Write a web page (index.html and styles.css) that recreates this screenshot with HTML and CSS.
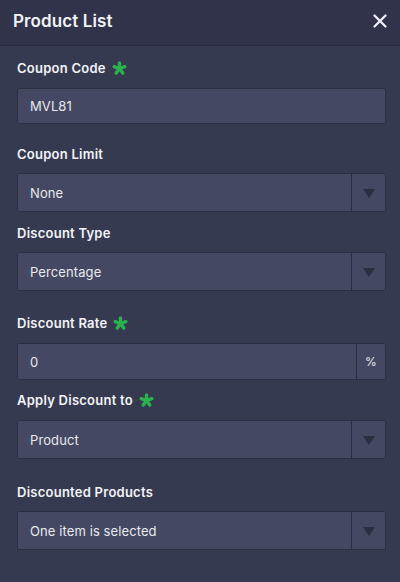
FILE: index.html
```html
<!DOCTYPE html>
<html>
<head>
<meta charset="utf-8">
<link rel="stylesheet" href="styles.css">
</head>
<body>
<div class="panel">
  <header class="head">
    <h1 class="title">Product List</h1>
    <svg class="close" viewBox="0 0 14 14" width="14" height="14"><path d="M1.5 1.5 L12.5 12.5 M12.5 1.5 L1.5 12.5" stroke="#f2f3f7" stroke-width="2.2" stroke-linecap="round"/></svg>
  </header>
  <main class="form">
    <div class="field f1">
      <label class="lbl">Coupon Code <svg class="req" viewBox="0 0 16 16" width="15" height="15"><g stroke="#2bb24c" stroke-width="3.6" stroke-linecap="round"><path d="M8 8 L8 2"/><path d="M8 8 L13.7 6.1"/><path d="M8 8 L11.5 12.9"/><path d="M8 8 L4.5 12.9"/><path d="M8 8 L2.3 6.1"/></g></svg></label>
      <div class="box"><span class="val">MVL81</span></div>
    </div>
    <div class="field f2">
      <label class="lbl">Coupon Limit</label>
      <div class="box sel"><span class="val">None</span><span class="arrow"><i class="tri"></i></span></div>
    </div>
    <div class="field f3">
      <label class="lbl">Discount Type</label>
      <div class="box sel"><span class="val">Percentage</span><span class="arrow"><i class="tri"></i></span></div>
    </div>
    <div class="field f4">
      <label class="lbl">Discount Rate <svg class="req" viewBox="0 0 16 16" width="15" height="15"><g stroke="#2bb24c" stroke-width="3.6" stroke-linecap="round"><path d="M8 8 L8 2"/><path d="M8 8 L13.7 6.1"/><path d="M8 8 L11.5 12.9"/><path d="M8 8 L4.5 12.9"/><path d="M8 8 L2.3 6.1"/></g></svg></label>
      <div class="box rate"><span class="val">0</span><span class="addon">%</span></div>
    </div>
    <div class="field f5">
      <label class="lbl">Apply Discount to <svg class="req" viewBox="0 0 16 16" width="15" height="15"><g stroke="#2bb24c" stroke-width="3.6" stroke-linecap="round"><path d="M8 8 L8 2"/><path d="M8 8 L13.7 6.1"/><path d="M8 8 L11.5 12.9"/><path d="M8 8 L4.5 12.9"/><path d="M8 8 L2.3 6.1"/></g></svg></label>
      <div class="box sel"><span class="val">Product</span><span class="arrow"><i class="tri"></i></span></div>
    </div>
    <div class="field f6">
      <label class="lbl">Discounted Products</label>
      <div class="box sel"><span class="val">One item is selected</span><span class="arrow"><i class="tri"></i></span></div>
    </div>
  </main>
</div>
</body>
</html>
```
FILE: styles.css
```css
html, body {
  margin: 0;
  padding: 0;
  background: #363a50;
}
body {
  width: 400px;
  height: 582px;
  font-family: Inter, "Noto Sans", sans-serif;
  color: #eceef3;
}
.panel {
  display: flex;
  flex-direction: column;
  height: 582px;
  background: #363a50;
}
.head {
  height: 45px;
  display: flex;
  align-items: center;
  justify-content: space-between;
  padding: 0 13px 0 13px;
  background: #30334a;
  border-bottom: 1px solid #262838;
}
.title {
  margin: 0;
  font-size: 17px;
  font-weight: 600;
  color: #f2f3f7;
  letter-spacing: 0.1px;
  position: relative;
  top: -2px;
}
.close {
  display: block;
  position: relative;
  top: -2px;
}
.form {
  display: flex;
  flex-direction: column;
  padding: 0 14px 0 17px;
}
.field {
  display: flex;
  flex-direction: column;
}
.lbl {
  display: flex;
  align-items: center;
  gap: 6px;
  height: 16px;
  font-size: 13px;
  font-weight: 600;
  letter-spacing: 0.25px;
  color: #f2f3f7;
  margin-bottom: 12px;
}
.req { display: block; }
.f1 { margin-top: 14px; }
.f2 { margin-top: 22px; }
.f3 { margin-top: 13px; }
.f4 { margin-top: 24px; }
.f5 { margin-top: 12px; }
.f6 { margin-top: 25px; }
.f2 .lbl, .f3 .lbl, .f6 .lbl { margin-bottom: 11px; }
.box {
  display: flex;
  align-items: center;
  height: 34px;
  background: #444862;
  border: 1px solid #2c2f42;
  border-radius: 2px;
  font-size: 13px;
  letter-spacing: 0.1px;
  color: #e8e9ee;
}
.sel { height: 37px; }
.rate { height: 35px; }
.val {
  flex: 1;
  padding-left: 12px;
}
.arrow {
  align-self: stretch;
  width: 33px;
  border-left: 1px solid #2c2f42;
  display: flex;
  align-items: center;
  justify-content: center;
}
.tri {
  width: 0;
  height: 0;
  border-left: 6px solid transparent;
  border-right: 6px solid transparent;
  border-top: 9px solid #2b2e40;
  margin-top: 1px;
}
.addon {
  align-self: stretch;
  width: 28px;
  border-left: 1px solid #2c2f42;
  display: flex;
  align-items: center;
  justify-content: center;
  font-size: 12px;
}
```
